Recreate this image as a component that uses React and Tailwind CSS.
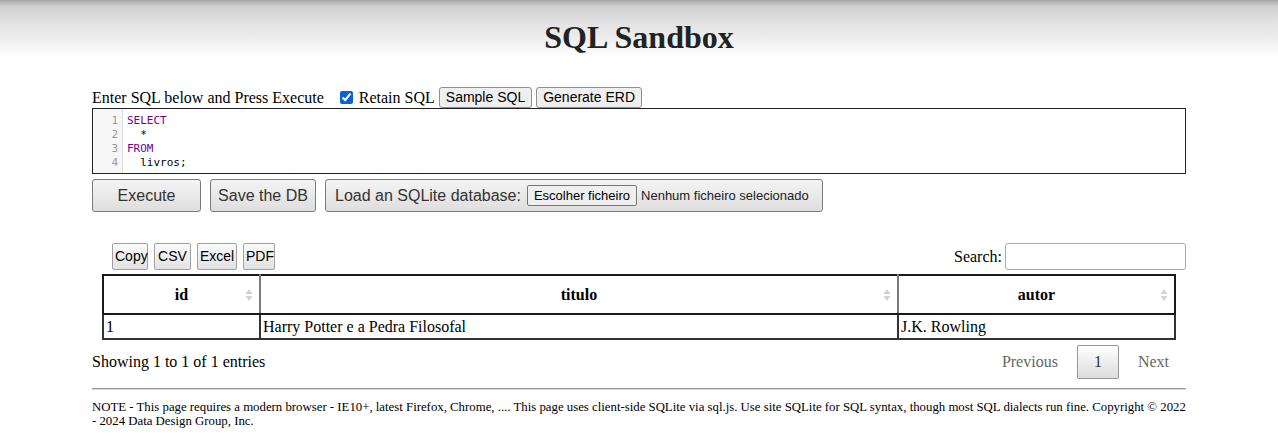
import React from "react";

const serif = { fontFamily: '"Liberation Serif", "Times New Roman", serif' };
const sans = { fontFamily: '"Liberation Sans", Arial, sans-serif' };
const mono = { fontFamily: '"DejaVu Sans Mono", "Liberation Mono", monospace' };

function SortIcon() {
  return (
    <svg width="8" height="14" viewBox="0 0 8 14" className="absolute right-[6px] top-1/2 -translate-y-1/2">
      <path d="M4 1 L7.5 6 L0.5 6 Z" fill="#d3d3d3" />
      <path d="M4 13 L7.5 8 L0.5 8 Z" fill="#d3d3d3" />
    </svg>
  );
}

export default function App() {
  const smallBtn =
    "h-[21px] px-[6px] text-[14px] leading-[19px] whitespace-nowrap text-black bg-[#efefef] border border-[#8f8f8f] rounded-[3px]";
  const bigBtn =
    "h-[33px] text-[16px] whitespace-nowrap text-[#333] bg-[linear-gradient(to_bottom,#f4f4f4,#dedede)] border border-[#7a7a7a] rounded-[3px]";
  const dtBtn =
    "h-[27px] px-[2px] text-[14px] whitespace-nowrap text-black bg-[linear-gradient(to_bottom,#fafafa,#e2e2e2)] border border-[#a0a0a0] rounded-[2px]";

  return (
    <div className="w-[1278px] min-h-[445px] bg-white text-black" style={serif}>
      <div className="h-[80px] bg-[linear-gradient(to_bottom,#a4a4a4_0px,#cfcfcf_6px,#e0e0e0_20px,#ebebeb_35px,#ffffff_58px)] pt-[19px]">
        <h1 className="text-center text-[32px] leading-[37px] font-bold text-[#222]">SQL Sandbox</h1>
      </div>

      <div className="px-[92px]">
        {/* Row 1 */}
        <div className="flex items-center h-[21px] mt-[7px] text-[16px]">
          <span>Enter SQL below and Press Execute</span>
          <input type="checkbox" defaultChecked className="ml-[16px] w-[13px] h-[13px] accent-[#0b62d6]" />
          <span className="ml-[6px]">Retain SQL</span>
          <button className={smallBtn + " ml-[4px]"} style={sans}>Sample SQL</button>
          <button className={smallBtn + " ml-[4px]"} style={sans}>Generate ERD</button>
        </div>

        {/* Editor */}
        <div className="flex h-[66px] border border-[#222] bg-white">
          <div
            className="w-[30px] bg-[#f7f7f7] border-r border-[#ddd] pt-[5px] pr-[4px] text-right text-[11px] leading-[14px] text-[#999]"
            style={mono}
          >
            <div>1</div>
            <div>2</div>
            <div>3</div>
            <div>4</div>
          </div>
          <div className="pl-[4px] pt-[5px] text-[11px] leading-[14px] text-black whitespace-pre" style={mono}>
            <div className="text-[#770088]">SELECT</div>
            <div>  *</div>
            <div className="text-[#770088]">FROM</div>
            <div>  livros;</div>
          </div>
        </div>

        {/* Action buttons */}
        <div className="flex items-center gap-[9px] mt-[5px]" style={sans}>
          <button className={bigBtn + " w-[109px]"}>Execute</button>
          <button className={bigBtn + " w-[106px]"}>Save the DB</button>
          <div className={bigBtn + " w-[498px] flex items-center pl-[9px]"}>
            <span>Load an SQLite database:</span>
            <span className="ml-[6px] h-[21px] px-[6px] text-[13px] leading-[19px] text-black bg-[#efefef] border border-[#767676] rounded-[2px] text-center">
              Escolher ficheiro
            </span>
            <span className="ml-[4px] text-[13px] text-[#222]">Nenhum ficheiro selecionado</span>
          </div>
        </div>

        {/* DataTables toolbar */}
        <div className="flex items-center justify-between mt-[31px]">
          <div className="flex gap-[6px] ml-[20px]" style={sans}>
            <button className={dtBtn + " w-[36px]"}>Copy</button>
            <button className={dtBtn + " w-[37px]"}>CSV</button>
            <button className={dtBtn + " w-[40px]"}>Excel</button>
            <button className={dtBtn + " w-[32px]"}>PDF</button>
          </div>
          <div className="flex items-center text-[16px]">
            <span>Search:</span>
            <input className="ml-[3px] w-[181px] h-[27px] border border-[#aaa] rounded-[3px] bg-white" />
          </div>
        </div>

        {/* Table */}
        <div className="px-[10px] mt-[4px]">
          <table className="w-full border-collapse text-[16px]">
            <thead>
              <tr className="h-[39px]">
                <th className="relative w-[157px] border-2 border-[#1a1a1a] border-r-[#7a7a7a] font-bold">
                  id
                  <SortIcon />
                </th>
                <th className="relative w-[638px] border-2 border-[#1a1a1a] border-r-[#7a7a7a] font-bold">
                  titulo
                  <SortIcon />
                </th>
                <th className="relative border-2 border-[#1a1a1a] font-bold">
                  autor
                  <SortIcon />
                </th>
              </tr>
            </thead>
            <tbody>
              <tr className="h-[25px]">
                <td className="border-2 border-[#333] px-[2px] leading-[20px]">1</td>
                <td className="border-2 border-[#333] px-[2px] leading-[20px]">Harry Potter e a Pedra Filosofal</td>
                <td className="border-2 border-[#333] px-[2px] leading-[20px]">J.K. Rowling</td>
              </tr>
            </tbody>
          </table>
        </div>

        {/* Info + pagination */}
        <div className="flex items-center justify-between mt-[5px] h-[34px]">
          <span className="text-[16px]">Showing 1 to 1 of 1 entries</span>
          <div className="flex items-center text-[16px] text-[#666] mr-[17px]">
            <span>Previous</span>
            <span className="ml-[19px] w-[42px] h-[34px] flex items-center justify-center text-[#333] border border-[#979797] rounded-[2px] bg-[linear-gradient(to_bottom,#ffffff,#dcdcdc)]">
              1
            </span>
            <span className="ml-[19px]">Next</span>
          </div>
        </div>

        {/* HR */}
        <div className="mt-[9px] border-t border-t-[#9a9a9a] border-b border-b-[#d8d8d8]" />

        {/* Note */}
        <p className="mt-[10px] text-[12.8px] leading-[14px] text-black">
          NOTE - This page requires a modern browser - IE10+, latest Firefox, Chrome, .... This page uses client-side SQLite via sql.js. Use site SQLite for SQL syntax, though most SQL dialects run fine. Copyright © 2022 - 2024 Data Design Group, Inc.
        </p>
      </div>
    </div>
  );
}
